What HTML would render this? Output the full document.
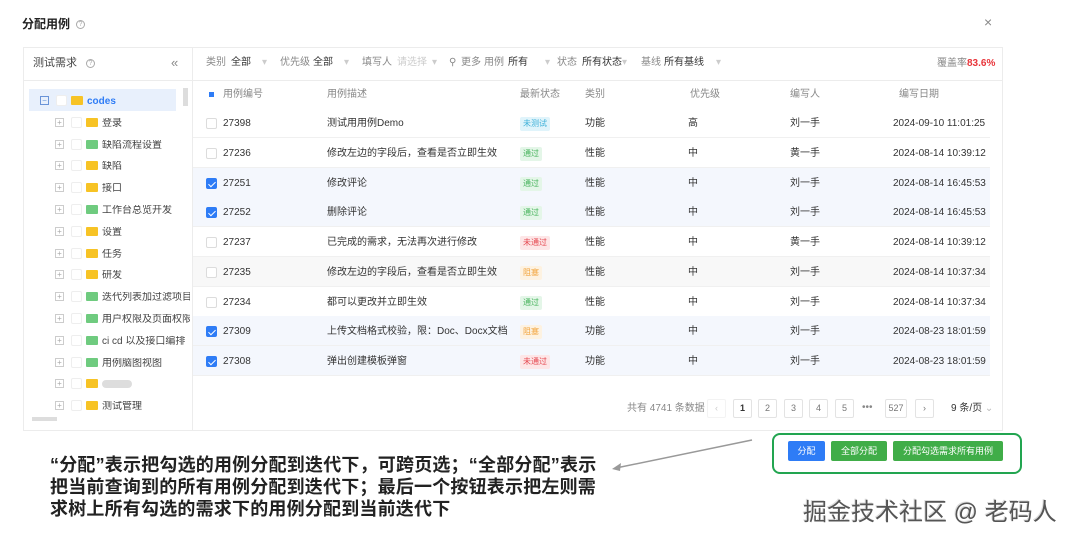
<!DOCTYPE html>
<html><head><meta charset="utf-8"><style>
*{box-sizing:border-box;margin:0;padding:0}
body{width:1080px;height:544px;background:#fff;font-family:"Liberation Sans","Noto Sans CJK SC",sans-serif;position:relative;overflow:hidden;color:#333}
.a{position:absolute;white-space:nowrap}
.s{font-size:10px;line-height:12px}
.g{color:#888}
.cb{position:absolute;width:11px;height:11px;border:1px solid #dcdcdc;border-radius:2px;background:#fff}
.cb.on{background:#2e7cf6;border-color:#2e7cf6}
.cb.on:after{content:"";position:absolute;left:3px;top:1px;width:3px;height:6px;border:solid #fff;border-width:0 1.5px 1.5px 0;transform:rotate(45deg)}
.pl{position:absolute;width:9px;height:9px;border:1px solid #ccc;font-size:8px;line-height:7px;text-align:center;color:#aaa}
.fd{position:absolute;width:12px;height:9px;border-radius:1px}
.tag{position:absolute;font-size:8px;padding:2px 3px;border-radius:2px;line-height:10px}
.row{position:absolute;left:193px;width:797px;height:30px;border-bottom:1px solid #f0f0f0}
.pg{position:absolute;top:399px;width:19px;height:19px;border:1px solid #e3e3e3;border-radius:2px;font-size:9px;text-align:center;line-height:17px;color:#777}
.btn{position:absolute;top:441px;height:20px;color:#fff;font-size:9px;line-height:20px;text-align:center;border-radius:2px}
.k{color:#333}.v{color:#ccc}
</style></head><body>
<div class="a" style="left:22px;top:17px;font-size:12px;line-height:15px;font-weight:bold;color:#222">分配用例</div>
<div class="a" style="left:76px;top:20px;width:9px;height:9px;border:1px solid #aaa;border-radius:50%;font-size:7px;line-height:7px;text-align:center;color:#aaa">?</div>
<div class="a" style="left:984px;top:14px;font-size:14px;line-height:16px;color:#888">×</div>

<div class="a" style="left:23px;top:47px;width:980px;height:384px;border:1px solid #ececec"></div>
<div class="a" style="left:192px;top:47px;width:1px;height:384px;background:#ececec"></div>
<div class="a" style="left:23px;top:80px;width:980px;height:1px;background:#ececec"></div>
<div class="a" style="left:33px;top:57px;font-size:11px;line-height:13px;color:#444">测试需求</div>
<div class="a" style="left:86px;top:59px;width:9px;height:9px;border:1px solid #aaa;border-radius:50%;font-size:7px;line-height:7px;text-align:center;color:#aaa">?</div>
<div class="a" style="left:171px;top:55px;font-size:13px;line-height:15px;color:#888">«</div>

<div class="a" style="left:29px;top:89px;width:147px;height:22px;background:#e8f0fc"></div>
<div class="a" style="left:183px;top:88px;width:5px;height:18px;background:#ddd"></div>
<div class="a" style="left:32px;top:417px;width:25px;height:4px;background:#ddd"></div>
<div id="tree"></div>

<div id="tb"></div>
<div class="a s g" style="left:937px;top:58px">覆盖率<b style="color:#e8343a">83.6%</b></div>

<div class="a" style="left:207px;top:90px;width:9px;height:9px;"><div style="margin:2px;width:5px;height:5px;background:#2e7cf6"></div></div>
<div class="a s g" style="left:223px;top:89px">用例编号</div>
<div class="a s g" style="left:327px;top:89px">用例描述</div>
<div class="a s g" style="left:520px;top:89px">最新状态</div>
<div class="a s g" style="left:585px;top:89px">类别</div>
<div class="a s g" style="left:690px;top:89px">优先级</div>
<div class="a s g" style="left:790px;top:89px">编写人</div>
<div class="a s g" style="left:899px;top:89px">编写日期</div>
<div id="rows"></div>

<div class="a s g" style="left:627px;top:403px">共有 4741 条数据</div>
<div class="pg" style="left:707px;border-color:#f3f3f3;color:#ccc">‹</div>
<div class="pg" style="left:733px;color:#333;font-weight:bold">1</div>
<div class="pg" style="left:758px">2</div>
<div class="pg" style="left:784px">3</div>
<div class="pg" style="left:809px">4</div>
<div class="pg" style="left:835px">5</div>
<div class="a s g" style="left:862px;top:402px">•••</div>
<div class="pg" style="left:885px;width:22px">527</div>
<div class="pg" style="left:915px">›</div>
<div class="a s" style="left:951px;top:403px">9 条/页 <span style="color:#bbb">⌄</span></div>

<div class="a" style="left:772px;top:433px;width:250px;height:41px;border:2px solid #22a550;border-radius:8px"></div>
<div class="btn" style="left:788px;width:37px;background:#2e7cf6">分配</div>
<div class="btn" style="left:831px;width:56px;background:#40ad48">全部分配</div>
<div class="btn" style="left:893px;width:110px;background:#40ad48">分配勾选需求所有用例</div>

<svg class="a" style="left:0;top:0" width="1080" height="544"><line x1="752" y1="440" x2="616" y2="468" stroke="#999" stroke-width="1.5"/><path d="M612 469 L621 463 L620 471 Z" fill="#999"/></svg>
<div class="a" style="left:50px;top:454px;font-size:18px;line-height:22px;color:#222;font-weight:bold;letter-spacing:0.2px">“分配”表示把勾选的用例分配到迭代下，可跨页选；“全部分配”表示<br>把当前查询到的所有用例分配到迭代下；最后一个按钮表示把左则需<br>求树上所有勾选的需求下的用例分配到当前迭代下</div>
<div class="a" style="left:803px;top:498px;font-size:24px;line-height:30px;color:#555;text-shadow:1px 1px 0 #fff,-1px -1px 0 #ddd">掘金技术社区 @ 老码人</div>

<script>
var tb=[[206,"类别","g"],[231,"全部","k"],[262,"▾","v"],[280,"优先级","g"],[313,"全部","k"],[344,"▾","v"],[362,"填写人","g"],[397,"请选择","v"],[432,"▾","v"],[449,"⚲","g"],[461,"更多","g"],[484,"用例","g"],[508,"所有","k"],[545,"▾","v"],[557,"状态","g"],[582,"所有状态","k"],[622,"▾","v"],[641,"基线","g"],[664,"所有基线","k"],[716,"▾","v"]];
var h="";tb.forEach(function(x){h+='<div class="a s '+x[2]+'" style="left:'+x[0]+'px;top:57px">'+x[1]+'</div>';});
document.getElementById("tb").innerHTML=h;
var t=[["codes",1],["登录",1],["缺陷流程设置",0],["缺陷",1],["接口",1],["工作台总览开发",0],["设置",1],["任务",1],["研发",1],["迭代列表加过滤项目",0],["用户权限及页面权限",0],["ci cd 以及接口编排",0],[" 用例脑图视图",0],["",1],["测试管理",1]];
h="";t.forEach(function(x,i){var y=101+i*21.8;var o=i==0?40:55;
h+='<div class="pl" style="left:'+(o)+'px;top:'+(y-5)+'px;'+(i==0?'border-color:#6a94d8;color:#6a94d8':'')+'">'+(i==0?'−':'+')+'</div>';
h+='<div class="cb" style="left:'+(o+16)+'px;top:'+(y-6)+'px;border-color:#eee"></div>';
h+='<div class="fd" style="left:'+(o+31)+'px;top:'+(y-5)+'px;background:'+(x[1]?'#f7c325':'#6fcb7f')+'"></div>';
if(i==13)h+='<div class="a" style="left:'+(o+47)+'px;top:'+(y-4)+'px;width:30px;height:8px;background:#ddd;border-radius:4px"></div>';
h+='<div class="a" style="left:'+(o+47)+'px;top:'+(y-5)+'px;font-size:10px;line-height:12px;max-width:'+(190-o-47)+'px;overflow:hidden;'+(i==0?'color:#2e7cf6;font-weight:bold':'color:#444')+'">'+x[0]+'</div>';});
document.getElementById("tree").innerHTML=h;
var r=[["27398","测试用用例Demo","未测试","功能","高","刘一手","2024-09-10 11:01:25",0],["27236","修改左边的字段后，查看是否立即生效","通过","性能","中","黄一手","2024-08-14 10:39:12",0],["27251","修改评论","通过","性能","中","刘一手","2024-08-14 16:45:53",1],["27252","删除评论","通过","性能","中","刘一手","2024-08-14 16:45:53",1],["27237","已完成的需求，无法再次进行修改","未通过","性能","中","黄一手","2024-08-14 10:39:12",0],["27235","修改左边的字段后，查看是否立即生效","阻塞","性能","中","刘一手","2024-08-14 10:37:34",2],["27234","都可以更改并立即生效","通过","性能","中","刘一手","2024-08-14 10:37:34",0],["27309","上传文档格式校验，限：Doc、Docx文档","阻塞","功能","中","刘一手","2024-08-23 18:01:59",1],["27308","弹出创建模板弹窗","未通过","功能","中","刘一手","2024-08-23 18:01:59",1]];
var tc={"未测试":["#e0f4fb","#3eb0d8"],"通过":["#e4f6e8","#45b25a"],"未通过":["#fde6e7","#e5464f"],"阻塞":["#fdf2e1","#f2a33a"]};
h="";r.forEach(function(x,i){var y=108+i*29.75;var bg=x[7]==1?'#f4f7fd':x[7]==2?'#f8f8f8':'#fff';
h+='<div class="row" style="top:'+y+'px;background:'+bg+'"></div>';
var c=y+16;
h+='<div class="cb'+(x[7]==1?' on':'')+'" style="left:206px;top:'+(c-6)+'px"></div>';
h+='<div class="a s" style="left:223px;top:'+(c-6)+'px">'+x[0]+'</div>';
h+='<div class="a s" style="left:327px;top:'+(c-6)+'px">'+x[1]+'</div>';
h+='<div class="tag" style="left:520px;top:'+(c-7)+'px;background:'+tc[x[2]][0]+';color:'+tc[x[2]][1]+'">'+x[2]+'</div>';
h+='<div class="a s" style="left:585px;top:'+(c-6)+'px">'+x[3]+'</div>';
h+='<div class="a s" style="left:688px;top:'+(c-6)+'px">'+x[4]+'</div>';
h+='<div class="a s" style="left:790px;top:'+(c-6)+'px">'+x[5]+'</div>';
h+='<div class="a s" style="left:893px;top:'+(c-6)+'px">'+x[6]+'</div>';});
document.getElementById("rows").innerHTML=h;
</script>
</body></html>
